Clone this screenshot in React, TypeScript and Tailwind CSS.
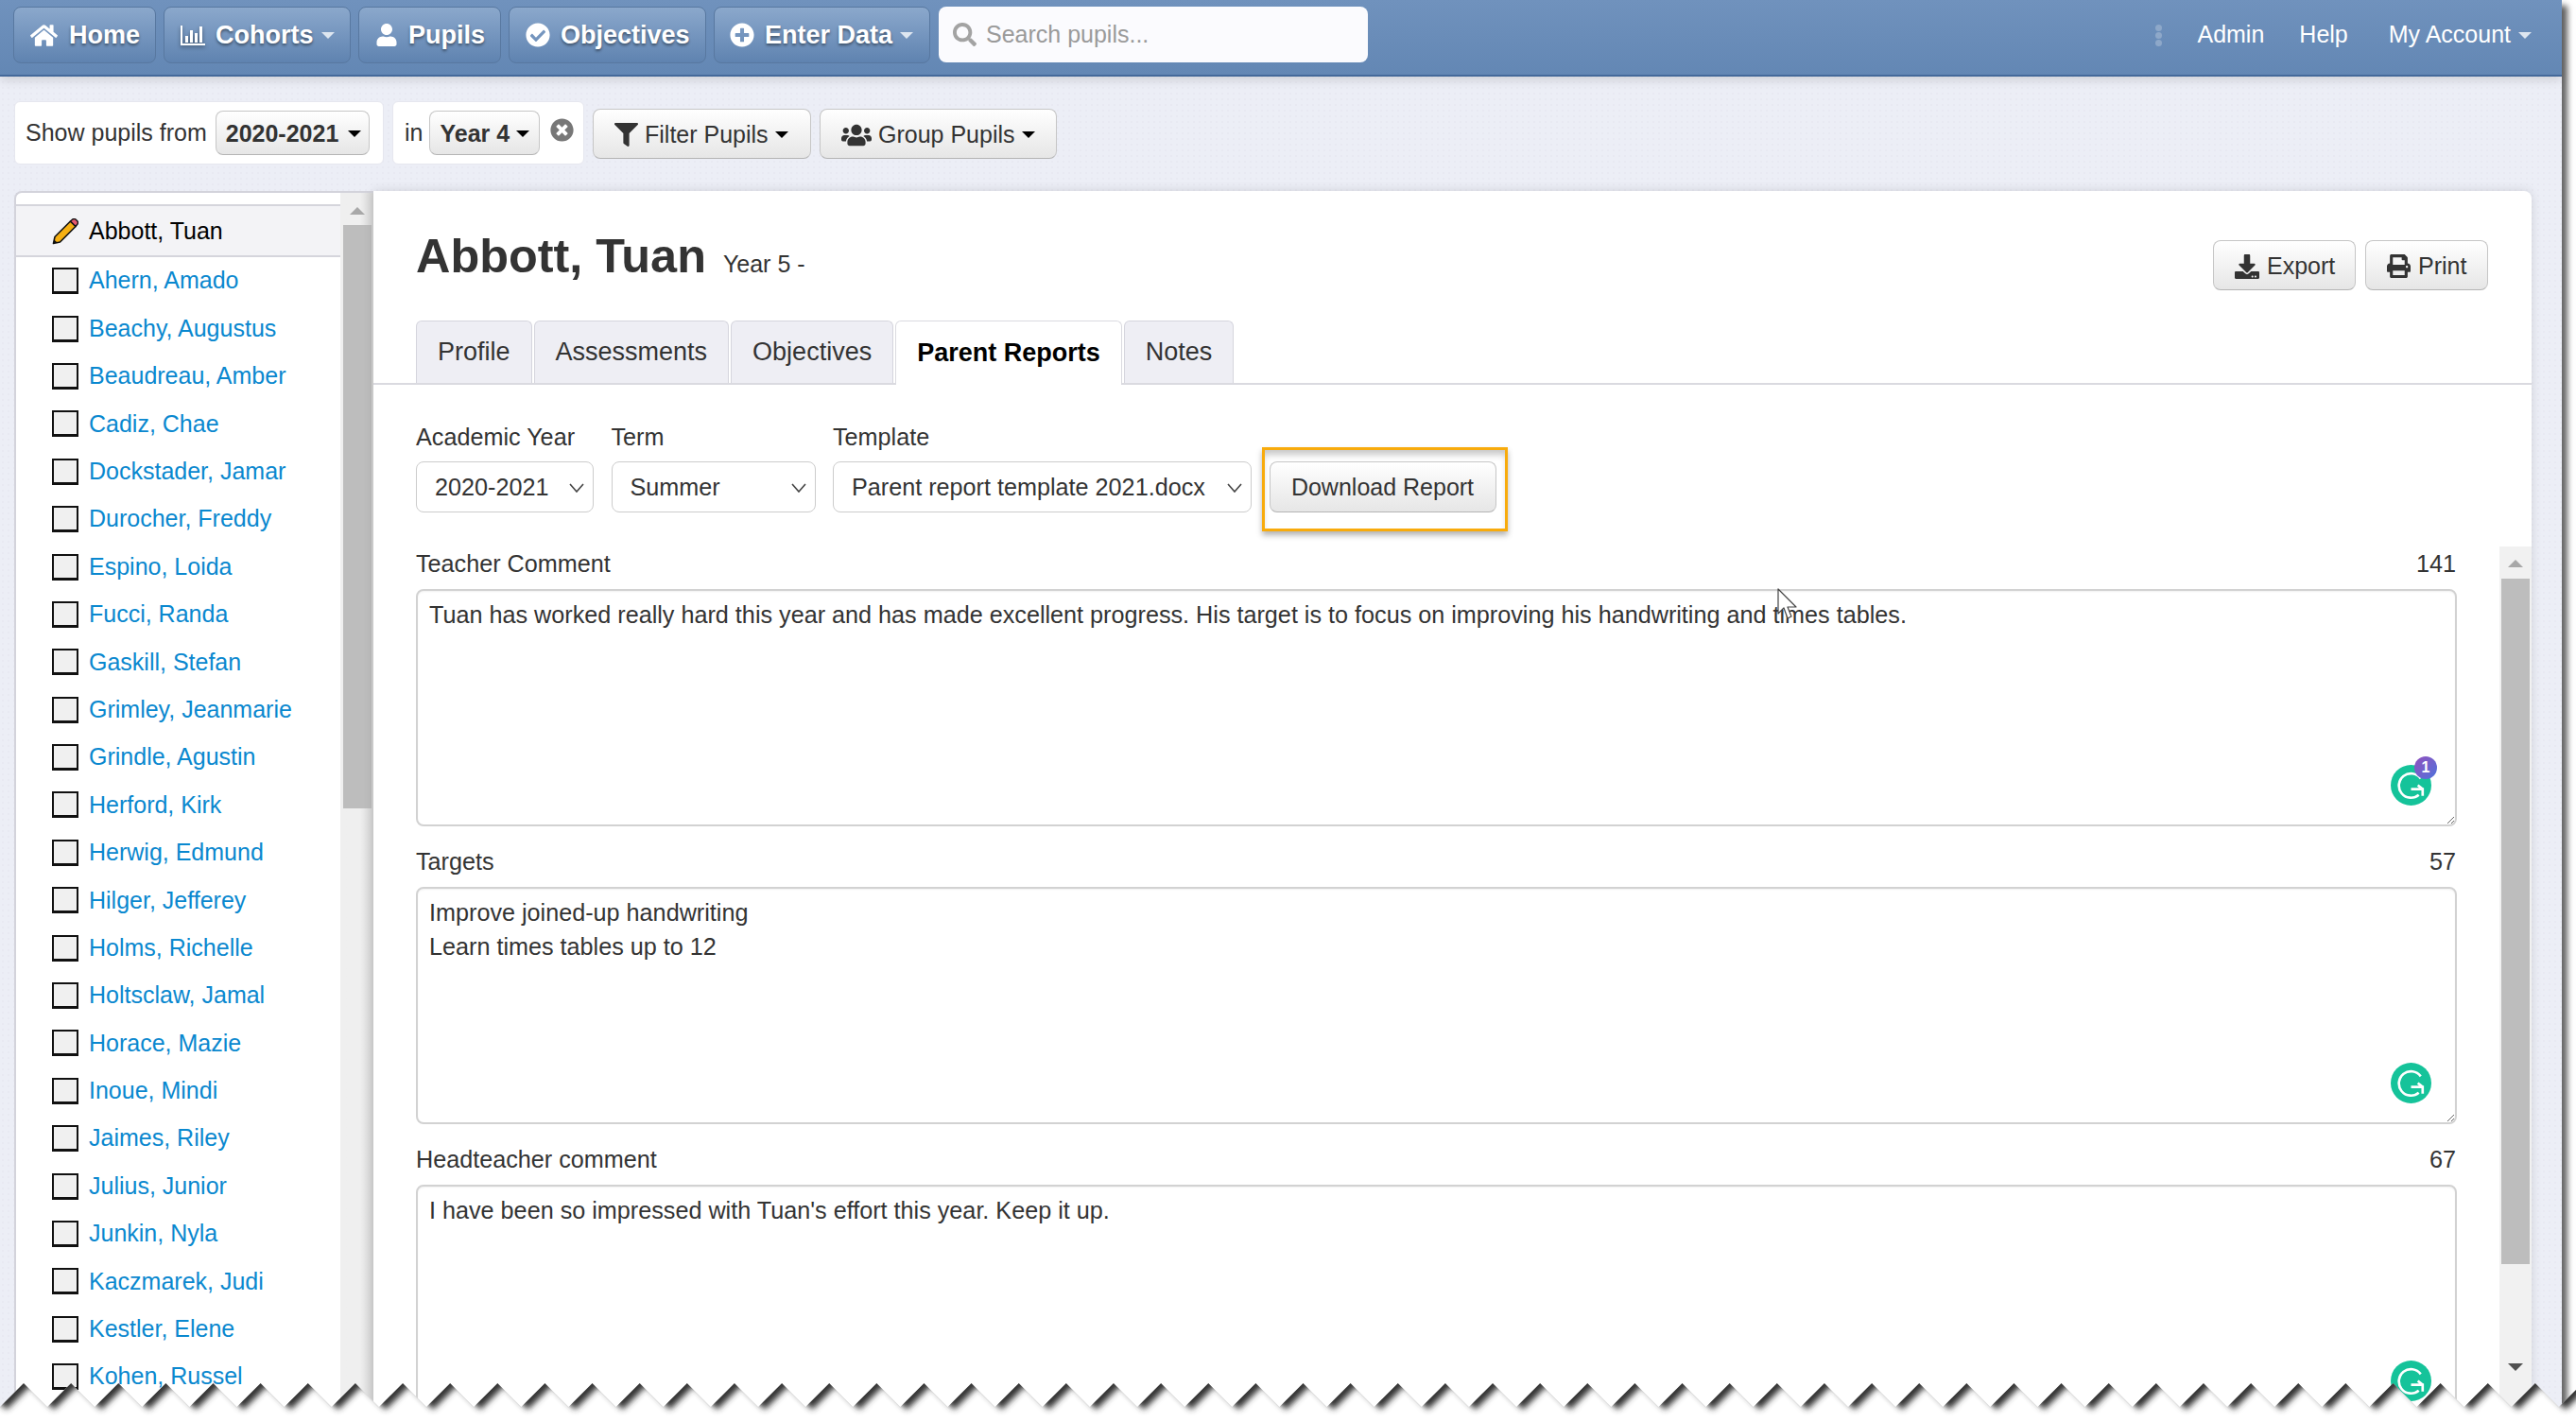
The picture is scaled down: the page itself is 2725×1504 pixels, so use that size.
import type { ReactNode } from 'react';
import {
  FaCheckCircle,
  FaDownload,
  FaFilter,
  FaHome,
  FaPlusCircle,
  FaPrint,
  FaSearch,
  FaTimesCircle,
  FaUser,
  FaUsers,
} from 'react-icons/fa';

const pupils = [
  'Ahern, Amado',
  'Beachy, Augustus',
  'Beaudreau, Amber',
  'Cadiz, Chae',
  'Dockstader, Jamar',
  'Durocher, Freddy',
  'Espino, Loida',
  'Fucci, Randa',
  'Gaskill, Stefan',
  'Grimley, Jeanmarie',
  'Grindle, Agustin',
  'Herford, Kirk',
  'Herwig, Edmund',
  'Hilger, Jefferey',
  'Holms, Richelle',
  'Holtsclaw, Jamal',
  'Horace, Mazie',
  'Inoue, Mindi',
  'Jaimes, Riley',
  'Julius, Junior',
  'Junkin, Nyla',
  'Kaczmarek, Judi',
  'Kestler, Elene',
  'Kohen, Russel',
];

const tabs = ['Profile', 'Assessments', 'Objectives', 'Parent Reports', 'Notes'];

const fields = [
  {
    label: 'Teacher Comment',
    count: 141,
    badge: true,
    text: 'Tuan has worked really hard this year and has made excellent progress. His target is to focus on improving his handwriting and times tables.',
  },
  {
    label: 'Targets',
    count: 57,
    badge: false,
    text: 'Improve joined-up handwriting\nLearn times tables up to 12',
  },
  {
    label: 'Headteacher comment',
    count: 67,
    badge: false,
    text: "I have been so impressed with Tuan's effort this year. Keep it up.",
  },
];

const selects = [
  { label: 'Academic Year', value: '2020-2021', width: 'w-[188px]' },
  { label: 'Term', value: 'Summer', width: 'w-[216px]' },
  { label: 'Template', value: 'Parent report template 2021.docx', width: 'w-[443px]' },
];

function Caret({ light }: { light?: boolean }) {
  return (
    <span
      className={
        light
          ? 'block border-x-[7px] border-t-[7px] border-x-transparent border-t-[#dde6f0]'
          : 'block border-x-[7px] border-t-[7px] border-x-transparent border-t-black'
      }
    />
  );
}

function NavButton({ children, className }: { children: ReactNode; className: string }) {
  return (
    <button
      className={`flex h-[60px] items-center rounded-[8px] border border-[#5878a0] bg-gradient-to-b from-[#8ba8cc] to-[#5f83b0] text-[27px] font-bold text-white [text-shadow:0_2px_3px_rgba(0,0,0,0.45)] ${className}`}
    >
      {children}
    </button>
  );
}

function ChartIcon() {
  return (
    <svg width="26" height="24" viewBox="0 0 26 24" fill="#fff" className="drop-shadow-[0_2px_2px_rgba(0,0,0,0.4)]">
      <rect x="0" y="2" width="2" height="21" />
      <rect x="0" y="21" width="26" height="2" />
      <rect x="5" y="13" width="3" height="7" />
      <rect x="10" y="7" width="3" height="13" />
      <rect x="15" y="10" width="3" height="10" />
      <rect x="20" y="3" width="3" height="17" />
    </svg>
  );
}

function LightButton({ children, className }: { children: ReactNode; className: string }) {
  return (
    <button
      className={`flex items-center rounded-[8px] border border-[#c6c6c6] border-b-[#b4b4b4] bg-gradient-to-b from-white to-[#e6e6e6] pt-[2px] text-[25px] text-[#333] ${className}`}
    >
      {children}
    </button>
  );
}

function Pencil() {
  return (
    <svg width="28" height="28" viewBox="0 0 28 28" className="shrink-0">
      <path d="M1.5 26.5 L3 19.5 L19.5 3 L25 8.5 L8.5 25 Z" fill="#f6b012" stroke="#111" strokeWidth="1.6" strokeLinejoin="round" />
      <path d="M19.5 3 L22 0.8 Q23.5 0 25 1 L27 3 Q28 4.5 27 6 L25 8.5 Z" fill="#e8596e" stroke="#111" strokeWidth="1.4" strokeLinejoin="round" />
      <path d="M1.5 26.5 L2.4 22.5 L5.5 25.6 Z" fill="#111" />
    </svg>
  );
}

function Grammarly({ badge }: { badge: boolean }) {
  return (
    <div className="absolute right-[27px] bottom-[22px] h-[43px] w-[43px]">
      <svg width="43" height="43" viewBox="0 0 42 42">
        <circle cx="21" cy="21" r="21" fill="#15c39a" />
        <path d="M31 14 A12.5 12.5 0 1 0 29 31" fill="none" stroke="#fff" strokeWidth="2.6" />
        <path d="M21 25 H33 V32 M33 25 L28 21" fill="none" stroke="#fff" strokeWidth="2.6" />
      </svg>
      {badge && (
        <span className="absolute -top-[9px] -right-[6px] flex h-[24px] w-[24px] items-center justify-center rounded-full bg-gradient-to-br from-[#8f4dbd] to-[#4672dc] text-[16px] font-bold text-white">
          1
        </span>
      )}
    </div>
  );
}

function TornEdge() {
  const period = 50.13;
  const peakY = 13;
  const valleyY = 38;
  const points: string[] = ['-25,' + peakY];
  for (let i = 0; i < 55; i++) {
    const peak = 25 + i * period;
    points.push(`${peak - period / 2},${valleyY}`);
    points.push(`${peak},${peakY}`);
  }
  const zig = points.join(' L');
  const below = `M${zig} L2800,${valleyY} L2800,60 L-25,60 Z`;
  const above = `M${zig} L2800,${valleyY} L2800,-60 L-25,-60 Z`;
  return (
    <svg width="2725" height="54" viewBox="0 0 2725 54" className="absolute bottom-0 left-0">
      <defs>
        <clipPath id="below">
          <path d={below} />
        </clipPath>
        <filter id="blur" x="-5%" y="-100%" width="110%" height="300%">
          <feGaussianBlur stdDeviation="3.2" />
        </filter>
      </defs>
      <path d={below} fill="#fff" />
      <g clipPath="url(#below)">
        <path d={above} fill="#333" filter="url(#blur)" transform="translate(7,3)" />
      </g>
    </svg>
  );
}

export default function App() {
  return (
    <div className="relative h-[1504px] w-[2725px] overflow-hidden bg-white font-['Liberation_Sans',Arial,sans-serif] text-[25px] text-[#333]">
      <div className="flex h-full w-[2710px] flex-col bg-[#eceef6] bg-[radial-gradient(#e8e9f2_1px,transparent_1px)] bg-[length:6px_6px] shadow-[8px_4px_6px_-2px_rgba(0,0,0,0.6)]">
        {/* Top bar */}
        <header className="flex h-[81px] shrink-0 items-start gap-[8px] border-b-2 border-[#44699a] bg-gradient-to-b from-[#7092bd] to-[#6387b4] pt-[7px] pl-[14px] shadow-[0_4px_10px_rgba(0,0,0,0.12)]">
          <NavButton className="w-[151px] gap-[12px] pl-[17px]">
            <FaHome size={29} />
            Home
          </NavButton>
          <NavButton className="w-[198px] gap-[11px] pl-[17px]">
            <ChartIcon />
            Cohorts
            <span className="-ml-[3px]">
              <Caret light />
            </span>
          </NavButton>
          <NavButton className="w-[151px] gap-[11px] pl-[17px]">
            <FaUser size={24} />
            Pupils
          </NavButton>
          <NavButton className="w-[209px] gap-[11px] pl-[17px]">
            <FaCheckCircle size={26} />
            Objectives
          </NavButton>
          <NavButton className="w-[229px] gap-[11px] pl-[16px]">
            <FaPlusCircle size={26} />
            Enter Data
            <span className="-ml-[3px]">
              <Caret light />
            </span>
          </NavButton>
          <div className="ml-[1px] flex h-[59px] w-[454px] items-center gap-[10px] rounded-[8px] bg-[#fbfbfe] pl-[15px] text-[#9a9a9a]">
            <FaSearch size={25} className="text-[#a3a3a3]" />
            Search pupils...
          </div>
          <div className="ml-auto flex h-[60px] items-center text-white">
            <div className="flex flex-col gap-[1px]">
              <span className="h-[7px] w-[7px] rounded-full bg-[#8ea8c9]" />
              <span className="h-[7px] w-[7px] rounded-full bg-[#8ea8c9]" />
              <span className="h-[7px] w-[7px] rounded-full bg-[#8ea8c9]" />
            </div>
            <span className="ml-[37px]">Admin</span>
            <span className="ml-[37px]">Help</span>
            <span className="ml-[43px]">My Account</span>
            <span className="mr-[32px] ml-[8px] flex">
              <Caret light />
            </span>
          </div>
        </header>

        {/* Filter row */}
        <div className="flex h-[121px] shrink-0 items-start gap-[9px] pt-[26px] pl-[15px]">
          <div className="flex h-[67px] w-[391px] items-center rounded-[6px] border border-[#e6e7ef] bg-white pl-[11px]">
            <span>Show pupils from</span>
            <LightButton className="ml-[9px] h-[47px] w-[163px] gap-[10px] pl-[10px] font-bold">
              2020-2021
              <Caret />
            </LightButton>
          </div>
          <div className="flex h-[67px] w-[203px] items-center rounded-[6px] border border-[#e6e7ef] bg-white pl-[12px]">
            <span>in</span>
            <LightButton className="ml-[7px] h-[47px] w-[117px] gap-[7px] pl-[10px] font-bold">
              Year 4
              <Caret />
            </LightButton>
            <FaTimesCircle size={25} className="-mt-[6px] ml-[11px] text-[#777]" />
          </div>
          <LightButton className="mt-[8px] h-[53px] w-[231px] gap-[7px] pl-[22px]">
            <FaFilter size={25} />
            Filter Pupils
            <Caret />
          </LightButton>
          <LightButton className="mt-[8px] h-[53px] w-[251px] gap-[7px] pl-[22px]">
            <FaUsers size={32} />
            Group Pupils
            <Caret />
          </LightButton>
        </div>

        {/* Body */}
        <div className="flex min-h-0 flex-1 pl-[15px]">
          {/* Pupil list */}
          <aside className="flex w-[380px] shrink-0 overflow-hidden rounded-tl-[8px] border-t-2 border-l-2 border-[#d3d3db] bg-white">
            <div className="w-[343px] shrink-0">
              <div className="h-[14px] border-b-2 border-[#d5d5dc]" />
              <div className="flex h-[54px] items-center gap-[11px] border-b-2 border-[#d5d5dc] bg-[#f3f3f6] pt-[1px] pl-[38px] text-black">
                <Pencil />
                Abbott, Tuan
              </div>
              {pupils.map((name) => (
                <div key={name} className="flex h-[50.4px] items-center gap-[11px] pl-[38px] text-[#0a88cf]">
                  <span className="h-[28px] w-[28px] shrink-0 border-2 border-b-[3px] border-[#111] bg-[#f0f0f0]" />
                  {name}
                </div>
              ))}
            </div>
            <div className="flex w-[35px] flex-col items-center bg-gradient-to-r from-[#efefef] from-60% to-[#d3d3d3]">
              <span className="mt-[15px] border-x-[8px] border-b-[8px] border-x-transparent border-b-[#a8a8a8]" />
              <span className="mt-[11px] h-[617px] w-[30px] bg-[#bdbdbd]" />
            </div>
          </aside>

          {/* Main panel */}
          <main className="flex w-[2283px] shrink-0 flex-col overflow-hidden rounded-tr-[8px] bg-white shadow-[0_0_12px_rgba(0,0,0,0.12)]">
            <div className="flex h-[137px] shrink-0 items-start justify-between pt-[44px] pr-[46px] pl-[45px]">
              <div className="flex items-baseline gap-[18px]">
                <h1 className="text-[50.4px] leading-none font-bold">Abbott, Tuan</h1>
                <span>Year 5 -</span>
              </div>
              <div className="mt-[8px] flex gap-[10px]">
                <LightButton className="h-[53px] w-[151px] gap-[8px] pl-[22px]">
                  <FaDownload size={26} />
                  Export
                </LightButton>
                <LightButton className="h-[53px] w-[130px] gap-[8px] pl-[22px]">
                  <FaPrint size={25} />
                  Print
                </LightButton>
              </div>
            </div>

            <nav className="flex h-[68px] shrink-0 gap-[2px] border-b-2 border-[#dadae0] pl-[45px] text-[27px]">
              {tabs.map((tab) => (
                <div
                  key={tab}
                  className={
                    tab === 'Parent Reports'
                      ? '-mb-[2px] flex h-[68px] items-center rounded-t-[6px] border-x border-t border-[#dadae0] bg-white px-[22px] font-bold text-black'
                      : 'flex h-[66px] items-center rounded-t-[6px] border-x border-t border-[#d5d5dd] bg-[#eeeef4] px-[22px]'
                  }
                >
                  {tab}
                </div>
              ))}
            </nav>

            {/* Report selectors */}
            <div className="flex shrink-0 items-end gap-[18.5px] pt-[37px] pl-[45px] text-[25.2px]">
              {selects.map((s) => (
                <label key={s.label} className={`block shrink-0 ${s.width}`}>
                  <span className="block h-[36px] leading-[36px]">{s.label}</span>
                  <span className="relative mt-[8px] block">
                    <select className="h-[54px] w-full appearance-none rounded-[8px] border border-[#ccc] bg-white pt-[2px] pl-[19px] text-[#333]">
                      <option>{s.value}</option>
                    </select>
                    <svg width="16" height="10" viewBox="0 0 16 10" className="absolute top-[23px] right-[10px]" fill="none" stroke="#444" strokeWidth="1.6">
                      <path d="M1 1 L8 9 L15 1" />
                    </svg>
                  </span>
                </label>
              ))}
              <div className="relative">
                <LightButton className="h-[54px] w-[240px] justify-center">Download Report</LightButton>
                <div className="absolute -top-[15px] -right-[12px] -bottom-[20px] -left-[8px] border-[3px] border-[#f8ab0c] shadow-[0_4px_6px_rgba(0,0,0,0.3),inset_0_7px_7px_-2px_rgba(0,0,0,0.22)]" />
              </div>
            </div>

            {/* Comment fields */}
            <div className="mt-[36px] flex min-h-0 flex-1 overflow-hidden text-[25.2px]">
              <div className="ml-[45px] w-[2159px] shrink-0 pt-[1px]">
                {fields.map((f) => (
                  <div key={f.label} className="mb-[20px]">
                    <div className="flex h-[36px] items-center justify-between pr-[1px]">
                      <span>{f.label}</span>
                      <span>{f.count}</span>
                    </div>
                    <div className="relative mt-[8px]">
                      <textarea
                        defaultValue={f.text}
                        className="block h-[251px] w-full rounded-[8px] border-2 border-[#d2d2d2] bg-white px-[12px] pt-[7px] leading-[36px] text-[#333] shadow-[inset_0_1px_2px_rgba(0,0,0,0.06)] outline-none"
                      />
                      <Grammarly badge={f.badge} />
                    </div>
                  </div>
                ))}
              </div>
              <div className="ml-[45px] flex w-[34px] shrink-0 flex-col items-center bg-[#f1f1f1]">
                <span className="mt-[14px] border-x-[8px] border-b-[8px] border-x-transparent border-b-[#a8a8a8]" />
                <span className="mt-[12px] h-[725px] w-[30px] bg-[#bdbdbd]" />
                <span className="mt-[105px] border-x-[8px] border-t-[8px] border-x-transparent border-t-[#505050]" />
              </div>
            </div>
          </main>
        </div>
      </div>

      {/* Mouse cursor captured in the screenshot */}
      <svg width="24" height="36" viewBox="0 0 24 36" className="absolute top-[622px] left-[1880px]">
        <path d="M1 1 L1 27 L7 21 L11 32 L15 30 L11 20 L20 20 Z" fill="#fff" stroke="#444" strokeWidth="1.2" strokeLinejoin="round" />
      </svg>

      <TornEdge />
    </div>
  );
}
